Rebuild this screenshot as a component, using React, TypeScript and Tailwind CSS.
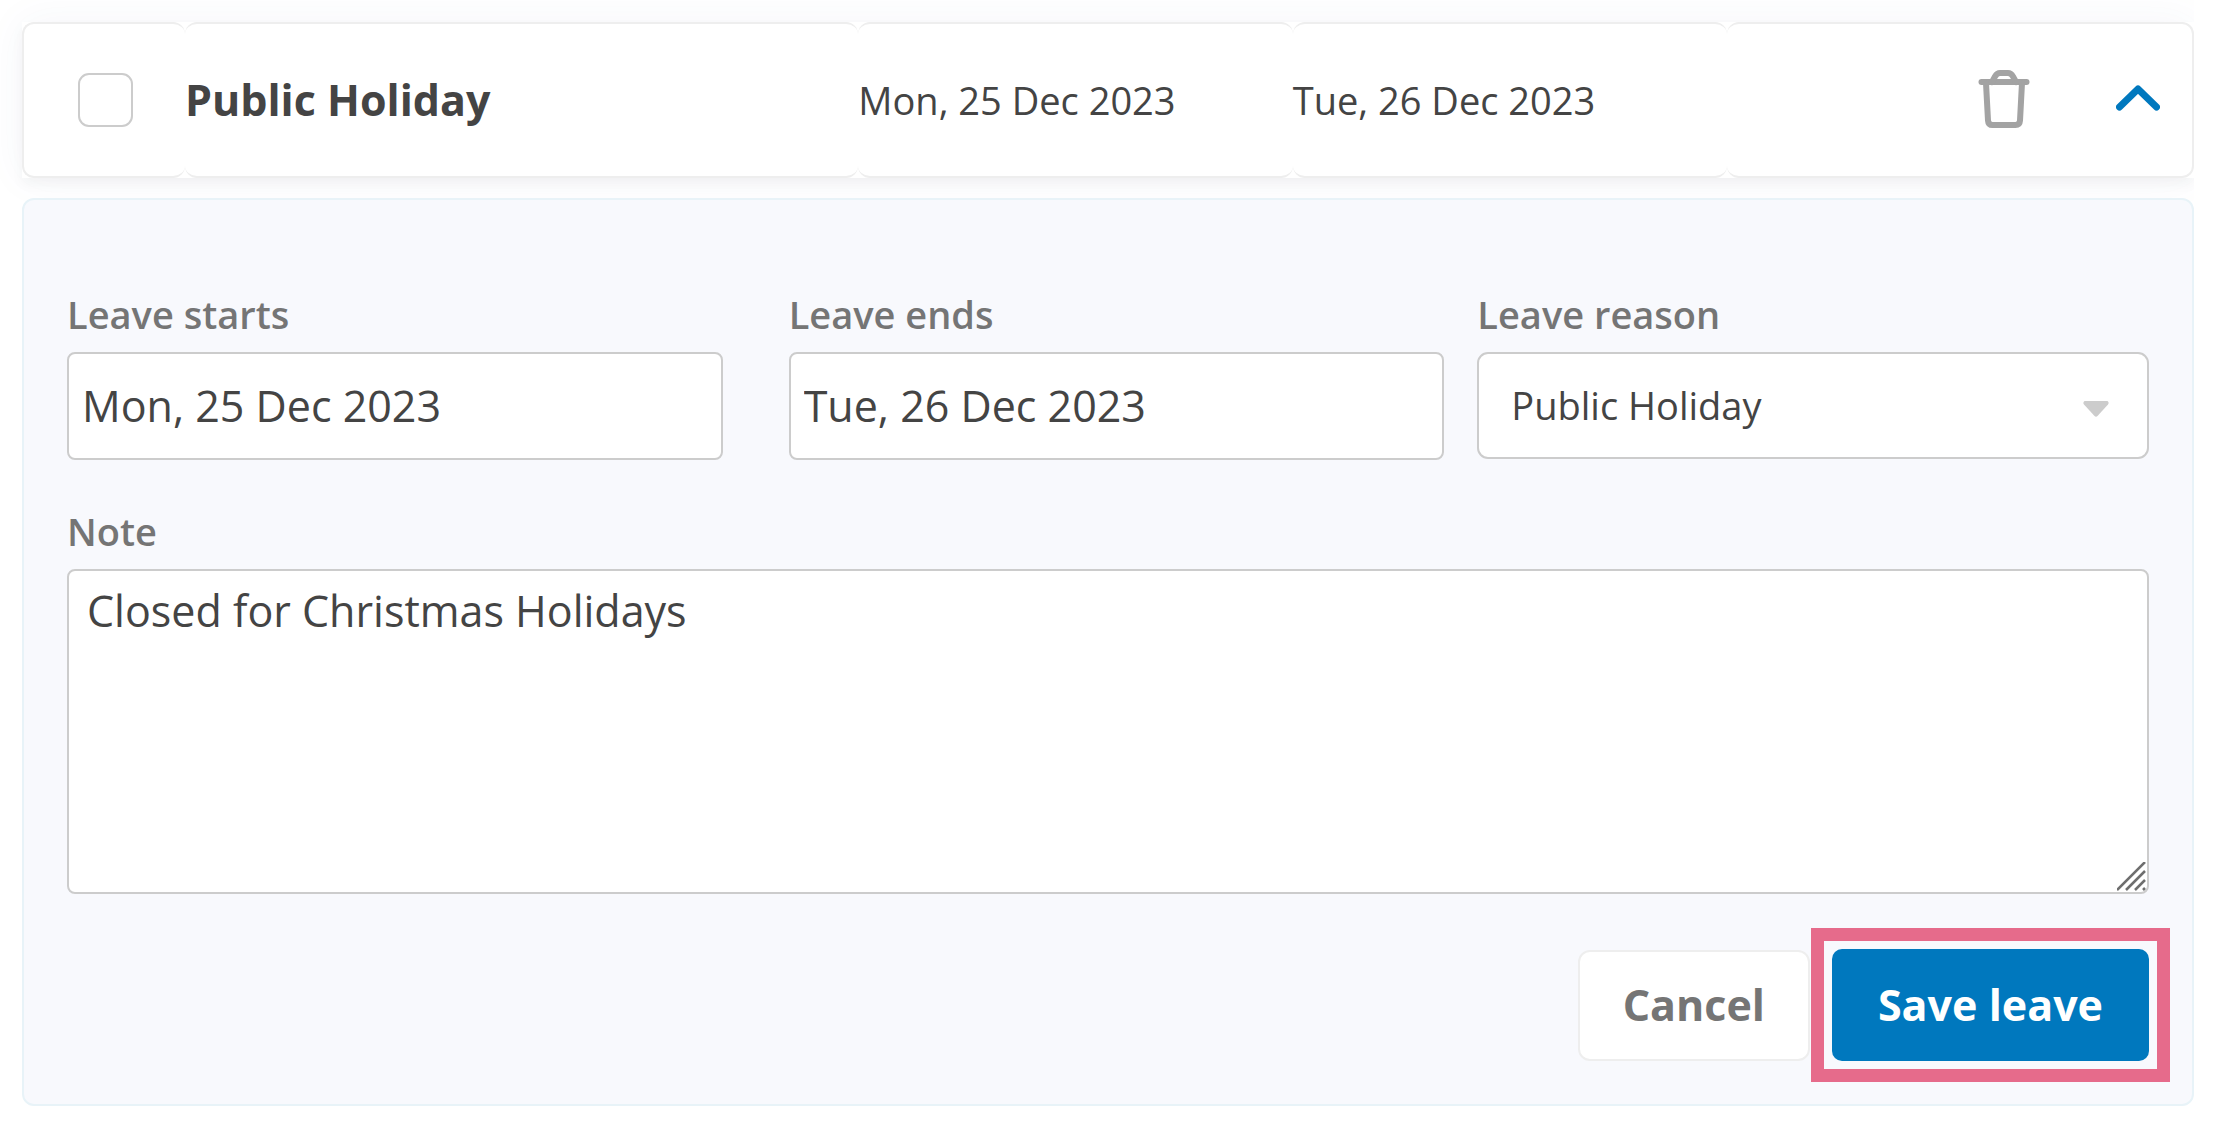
import { useState } from "react";
import type { ReactNode } from "react";

const cell =
  "h-[156px] rounded-[12px] border-y-2 border-[#eeeeee] bg-white p-0 text-left align-middle";
const control =
  "block w-full border-2 border-[#cccccc] bg-white text-[#444444] outline-none focus:border-[#0078be]";

function TrashIcon() {
  return (
    <svg
      className="h-[58px] w-[52px]"
      viewBox="0 0 52 58"
      fill="none"
      stroke="#a3a3a3"
      strokeWidth="6"
      strokeLinecap="round"
      strokeLinejoin="round"
      aria-hidden="true"
    >
      <path d="M3.500 12h45" />
      <path d="M14 12l3-5.500q2-3.500 5-3.500h8q3 0 5 3.500l3 5.500" />
      <path d="M8 13l2 37.500q.3 4.500 4.500 4.500h23q4.200 0 4.500-4.500L44 13" />
    </svg>
  );
}

function ChevronUpIcon() {
  return (
    <svg
      className="h-7 w-11"
      viewBox="0 0 44 28"
      fill="none"
      stroke="#0078be"
      strokeWidth="7"
      strokeLinecap="round"
      strokeLinejoin="round"
      aria-hidden="true"
    >
      <path d="M3.500 22L22 4l18.500 18" />
    </svg>
  );
}

function Field({ id, label, children }: { id: string; label: string; children: ReactNode }) {
  return (
    <div>
      <label
        htmlFor={id}
        className="mb-[10px] block text-[38px] leading-[56px] font-semibold text-[#757575]"
      >
        {label}
      </label>
      {children}
    </div>
  );
}

export default function App() {
  const [selected, setSelected] = useState(false);
  const [starts, setStarts] = useState("Mon, 25 Dec 2023");
  const [ends, setEnds] = useState("Tue, 26 Dec 2023");
  const [note, setNote] = useState("Closed for Christmas Holidays");

  return (
    <main className="mr-[21px] overflow-hidden bg-white pt-[22px] pb-4 pl-[22px] font-['Open_Sans','Noto_Sans',sans-serif] text-[#444444]">
      <table className="w-full table-fixed border-separate border-spacing-0 bg-white shadow-[0_6px_12px_rgba(0,0,0,0.04),0_0_40px_rgba(60,80,160,0.05)]">
        <colgroup>
          <col className="w-[163px]" />
          <col className="w-[31%]" />
          <col className="w-[20%]" />
          <col className="w-[20%]" />
          <col />
        </colgroup>
        <tbody>
          <tr>
            <td className={`${cell} border-l-2 pl-[54px]`}>
              <input
                type="checkbox"
                aria-label="Select Public Holiday"
                checked={selected}
                onChange={(e) => setSelected(e.target.checked)}
                className="block h-[54px] w-[55px] appearance-none rounded-[11px] border-2 border-[#cccccc] bg-white checked:bg-[#0078be]"
              />
            </td>
            <th scope="row" className={`${cell} text-[43px] leading-[60px] font-bold`}>
              Public Holiday
            </th>
            <td className={`${cell} text-[38px] leading-[54px]`}>Mon, 25 Dec 2023</td>
            <td className={`${cell} text-[38px] leading-[54px]`}>Tue, 26 Dec 2023</td>
            <td className={`${cell} border-r-2 pr-8`}>
              <div className="flex items-center justify-end gap-[86px] pb-[2px]">
                <button type="button" aria-label="Delete leave">
                  <TrashIcon />
                </button>
                <button type="button" aria-label="Collapse details" aria-expanded="true">
                  <ChevronUpIcon />
                </button>
              </div>
            </td>
          </tr>
        </tbody>
      </table>

      <form
        onSubmit={(e) => e.preventDefault()}
        className="relative mt-5 rounded-[12px] border-2 border-[#e8f3f8] bg-[#f8f9fd] px-[43px] pt-[86px] pb-[43px]"
      >
        <div className="flex gap-[33px]">
          <div className="grid flex-[1378] grid-cols-2 gap-[66px]">
            <Field id="starts" label="Leave starts">
              <input
                id="starts"
                type="text"
                value={starts}
                onChange={(e) => setStarts(e.target.value)}
                className={`${control} h-[108px] rounded-lg px-[13px] pb-[2px] text-[43px]`}
              />
            </Field>
            <Field id="ends" label="Leave ends">
              <input
                id="ends"
                type="text"
                value={ends}
                onChange={(e) => setEnds(e.target.value)}
                className={`${control} h-[108px] rounded-lg px-[13px] pb-[2px] text-[43px]`}
              />
            </Field>
          </div>
          <div className="flex-[672]">
            <Field id="reason" label="Leave reason">
              <div className="relative">
                <select
                  id="reason"
                  className={`${control} h-[107px] appearance-none rounded-[11px] px-8 text-[38px]`}
                >
                  <option>Public Holiday</option>
                </select>
                <svg
                  className="pointer-events-none absolute top-[49px] right-10 h-4 w-[26px]"
                  viewBox="0 0 26 16"
                  fill="#cccccc"
                  aria-hidden="true"
                >
                  <path d="M1.500 0h23q2 1.500.5 3.500L14.500 15q-1.500 1.500-3 0L1 3.500Q-.5 1.500 1.500 0z" />
                </svg>
              </div>
            </Field>
          </div>
        </div>

        <div className="mt-[43px]">
          <Field id="note" label="Note">
            <div className="relative">
              <textarea
                id="note"
                value={note}
                onChange={(e) => setNote(e.target.value)}
                className={`${control} h-[325px] resize-none rounded-lg px-[18px] py-[9px] text-[43px] leading-[62px]`}
              />
              <svg
                className="pointer-events-none absolute right-[2px] bottom-[2px] h-[30px] w-[30px]"
                viewBox="0 0 30 30"
                stroke="#6e6e6e"
                strokeWidth="2.500"
                aria-hidden="true"
              >
                <path d="M0 28L28 0M9 28L28 9M18 28L28 18M26 28l2-2" />
              </svg>
            </div>
          </Field>
        </div>

        <div className="mt-[55px] flex items-center justify-end gap-[22px] text-[43px] leading-[60px] font-bold">
          <button
            type="button"
            className="h-[111px] rounded-[12px] border-2 border-[#eeeeee] bg-white px-[43px] text-[#757575]"
          >
            Cancel
          </button>
          <div className="relative">
            <button
              type="submit"
              className="block h-[112px] rounded-[10px] bg-[#0078be] px-[46px] text-white"
            >
              Save leave
            </button>
            <span
              className="pointer-events-none absolute -inset-[21px] border-[13px] border-[#e66b8b]"
              aria-hidden="true"
            />
          </div>
        </div>
      </form>
    </main>
  );
}
